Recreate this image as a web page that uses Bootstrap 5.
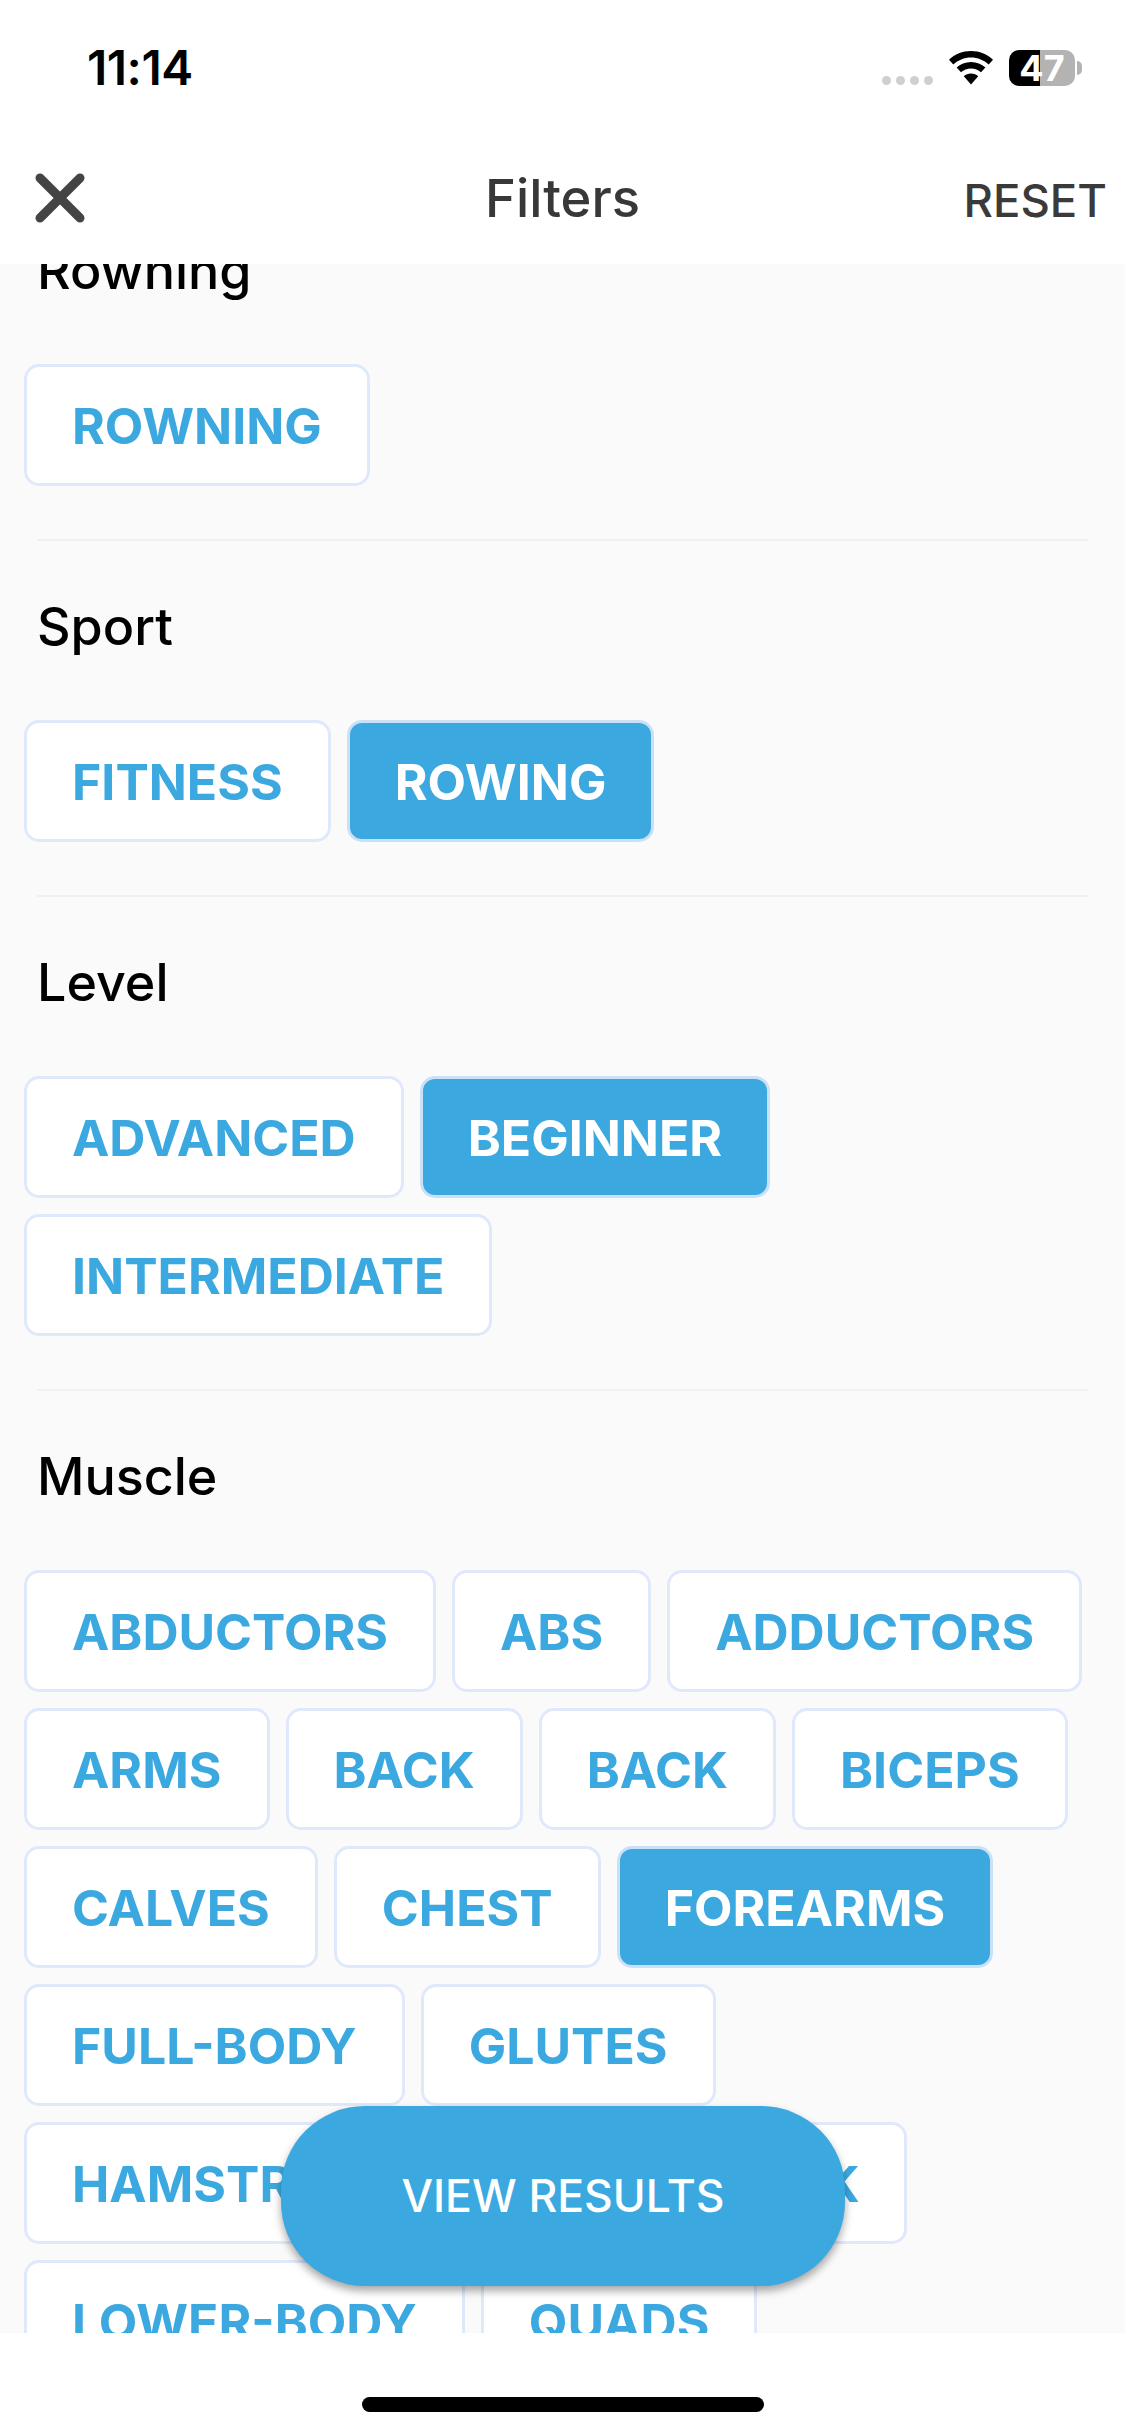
<!DOCTYPE html>
<html lang="en">
<head>
<meta charset="utf-8">
<title>Filters</title>
<link rel="stylesheet" href="https://cdn.jsdelivr.net/npm/bootstrap@5.3.0/dist/css/bootstrap.min.css">
<style>
html,body{margin:0;background:#fff;font-family:Inter,"Liberation Sans",sans-serif}
.phone{width:1125px;height:2436px;overflow:hidden}
.statusbar{height:132px;padding:6px 43px 0 87px}
.clock{font-size:48px;font-weight:600;color:#000;letter-spacing:-.5px;line-height:1;margin-top:-2px}
.status-icons{gap:15px;height:36px;margin-top:-2px}
.dots{gap:5px;align-self:flex-end;padding-bottom:1px}
.dots i{display:block;width:9px;height:9px;border-radius:50%;background:#cfcfcf}
.batt{width:66px;height:36px;border-radius:10px;overflow:hidden;background:linear-gradient(90deg,#000 31px,#b3b3b3 31px);color:#fff;font-size:36px;font-weight:700;line-height:36px;text-align:center}
.batt-wrap{gap:2px}
.nub{width:5px;height:14px;background:#b3b3b3;border-radius:0 5px 5px 0}
.topbar{height:132px;padding:0 18px 0 35px}
.topbar h1{font-size:52.5px;font-weight:500;color:#383838;margin:0;line-height:1;position:absolute;left:0;right:0;text-align:center;pointer-events:none}
.reset{font-size:45.5px;font-weight:500;color:#3a3a3a;line-height:1;margin-top:6px}
.scroller{background:#fafafb;min-height:0;overflow:hidden}
.sect-title{font-size:52px;font-weight:500;line-height:60px;color:#000;margin:56px 0 63px 37px}
.sect-title.first{margin-top:-23px}
.chips{gap:16px;padding-left:24px;padding-right:24px}
.chip{height:122px;padding:2px 45px 0;border:3px solid #dfe9fb;border-radius:15px;background:#fff;color:#3ca8e0;font-size:50px;font-weight:700;line-height:1}
.chip.on{background:#3ca8e0;color:#fff;border-color:#c9e1f7}
.chip.tight{letter-spacing:-1.2px}
.rule{height:2px;margin:53px 37px 0;background:#f0f0f2}
.bottom{height:103px}
.homebar{width:402px;height:15px;border-radius:8px;background:#000;margin-top:64px}
.cta{position:absolute;left:281px;top:2106px;width:564px;height:180px;border:0;border-radius:84px;background:#3ca8e0;color:#fff;font-size:44.5px;font-weight:500;box-shadow:0 5px 8px rgba(0,0,0,.35)}
</style>
</head>
<body>
<div class="phone d-flex flex-column position-relative">
  <div class="statusbar d-flex justify-content-between align-items-center flex-shrink-0">
    <div class="clock">11:14</div>
    <div class="status-icons d-flex align-items-center">
      <div class="dots d-flex"><i></i><i></i><i></i><i></i></div>
      <svg width="46" height="34" viewBox="0 0 46 34" aria-hidden="true">
        <path d="M23 0C14.500 0 6.800 3.300 1 8.700l4.300 4.700C10 9.100 16.200 6.400 23 6.400s13 2.700 17.700 7L45 8.700C39.200 3.300 31.500 0 23 0z"/>
        <path d="M23 11c-5.600 0-10.600 2.100-14.400 5.600l4.400 4.700c2.600-2.400 6.100-3.900 10-3.900s7.400 1.500 10 3.900l4.400-4.700C33.600 13.100 28.600 11 23 11z"/>
        <path d="M23 22.500c-2.800 0-5.300 1-7.200 2.800L23 33.500l7.200-8.200c-1.900-1.800-4.400-2.800-7.200-2.800z"/>
      </svg>
      <div class="batt-wrap d-flex align-items-center">
        <div class="batt">47</div>
        <div class="nub"></div>
      </div>
    </div>
  </div>
  <div class="topbar d-flex justify-content-between align-items-center position-relative flex-shrink-0">
    <svg width="50" height="50" viewBox="0 0 50 50" aria-hidden="true"><path d="M5 5L45 45M45 5L5 45" stroke="#444" stroke-width="9" stroke-linecap="round"/></svg>
    <h1>Filters</h1>
    <div class="reset">RESET</div>
  </div>
  <main class="scroller flex-grow-1">
    <div class="sect-title first">Rowning</div>
    <div class="chips d-flex flex-wrap"><button class="chip btn">ROWNING</button></div>
    <div class="rule"></div>
    <div class="sect-title">Sport</div>
    <div class="chips d-flex flex-wrap"><button class="chip btn">FITNESS</button><button class="chip btn on">ROWING</button></div>
    <div class="rule"></div>
    <div class="sect-title">Level</div>
    <div class="chips d-flex flex-wrap"><button class="chip btn">ADVANCED</button><button class="chip btn on">BEGINNER</button><button class="chip btn">INTERMEDIATE</button></div>
    <div class="rule"></div>
    <div class="sect-title">Muscle</div>
    <div class="chips d-flex flex-wrap">
      <button class="chip btn">ABDUCTORS</button><button class="chip btn">ABS</button><button class="chip btn">ADDUCTORS</button>
      <button class="chip btn">ARMS</button><button class="chip btn">BACK</button><button class="chip btn">BACK</button><button class="chip btn">BICEPS</button>
      <button class="chip btn">CALVES</button><button class="chip btn">CHEST</button><button class="chip btn on">FOREARMS</button>
      <button class="chip btn">FULL-BODY</button><button class="chip btn">GLUTES</button>
      <button class="chip btn">HAMSTRINGS</button><button class="chip btn tight">LOWER-BACK</button>
      <button class="chip btn">LOWER-BODY</button><button class="chip btn">QUADS</button>
    </div>
  </main>
  <div class="bottom d-flex justify-content-center flex-shrink-0"><div class="homebar"></div></div>
  <button class="cta btn">VIEW RESULTS</button>
</div>
<script src="https://cdn.jsdelivr.net/npm/bootstrap@5.3.0/dist/js/bootstrap.bundle.min.js"></script>
</body>
</html>
